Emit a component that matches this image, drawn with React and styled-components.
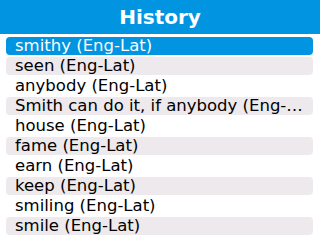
import React from 'react'
import styled, { createGlobalStyle } from 'styled-components'

const GlobalStyle = createGlobalStyle`
  html, body {
    margin: 0;
    padding: 0;
    background: #ffffff;
  }
  body {
    font-family: "DejaVu Sans", "Liberation Sans", sans-serif;
  }
`;

const Screen = styled.div`
  width: 320px;
  height: 240px;
  overflow: hidden;
  background: #ffffff;
`;

const TitleBar = styled.div`
  height: 34px;
  background: #0094e1;
  color: #ffffff;
  font-weight: 700;
  font-size: 20px;
  display: flex;
  align-items: center;
  justify-content: center;
`;

const List = styled.div`
  display: flex;
  flex-direction: column;
  gap: 2px;
  padding: 3px 7px 0 6px;
`;

const Row = styled.div`
  height: 18px;
  line-height: 18px;
  padding: 0 10px 0 9px;
  border-radius: 4px;
  font-size: 16.5px;
  color: ${p => (p.$selected ? '#ffffff' : '#000000')};
  background: ${p => (p.$selected ? '#0094e1' : p.$shaded ? '#ede9ec' : 'transparent')};
  white-space: nowrap;
  overflow: hidden;
  text-overflow: ellipsis;
`;

const items = [
  'smithy (Eng-Lat)',
  'seen (Eng-Lat)',
  'anybody (Eng-Lat)',
  'Smith can do it, if anybody (Eng-Lat)',
  'house (Eng-Lat)',
  'fame (Eng-Lat)',
  'earn (Eng-Lat)',
  'keep (Eng-Lat)',
  'smiling (Eng-Lat)',
  'smile (Eng-Lat)',
];

const App = () => {
  return (
    <Screen>
      <GlobalStyle />
      <TitleBar>History</TitleBar>
      <List>
        {items.map((text, i) => (
          <Row key={text} $selected={i === 0} $shaded={i % 2 === 1}>
            {text}
          </Row>
        ))}
      </List>
    </Screen>
  )
}

export default App
